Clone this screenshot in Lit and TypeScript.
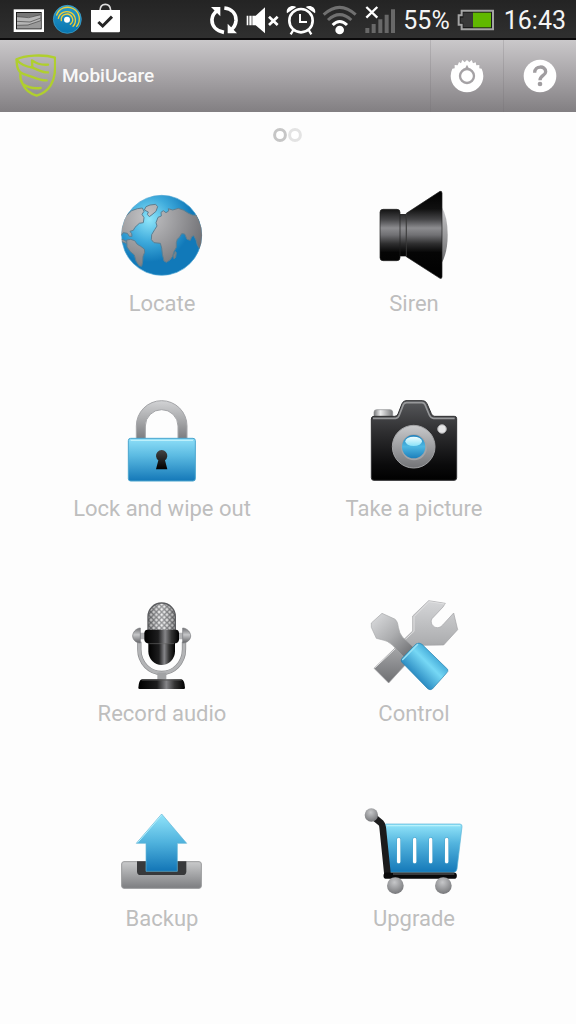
import { LitElement, html, css, svg, TemplateResult } from "lit";
import { customElement, property } from "lit/decorators.js";

const locate = html`<svg class="art" viewBox="6 0 360 330" aria-hidden="true">
  <defs>
    <radialGradient id="sea" cx="148" cy="118" r="150" gradientUnits="userSpaceOnUse">
      <stop offset="0" stop-color="#8fe6fa" /><stop offset=".45" stop-color="#3fabdc" /><stop offset=".85" stop-color="#1179b9" /><stop offset="1" stop-color="#1179b9" />
    </radialGradient>
    <radialGradient id="land" cx="140" cy="110" r="190" gradientUnits="userSpaceOnUse">
      <stop offset="0" stop-color="#c4c4c6" /><stop offset=".5" stop-color="#99999c" /><stop offset="1" stop-color="#6c6c70" />
    </radialGradient>
    <clipPath id="ball"><circle cx="185" cy="166" r="121" /></clipPath>
  </defs>
  <circle cx="185" cy="166" r="120" fill="url(#sea)" stroke="#4aa3d2" stroke-width="2" />
  <g clip-path="url(#ball)" fill="url(#land)" stroke="#5c7f92" stroke-width="3" stroke-linejoin="round">
    <path d="M55 150L74 112L95 92L112 86L127 84L132 94L126 103L132 113L130 128L118 130L105 142L100 151L90 154L95 161L96 169L88 169L82 160L70 158L64 166Z" />
    <path d="M138 80L150 75L167 73L173 80L168 94L156 104L148 110L142 103L145 96L133 90Z" />
    <path d="M60 176L72 180L84 188L78 190L62 184Z" />
    <path d="M80 180L92 178L104 182L112 193L122 199L133 207L134 217L129 229L128 246L125 259L117 257L108 243L103 225L91 215L81 201Z" />
    <path d="M190 92L198 98L206 93L205 86L218 90L235 85L250 90L264 99L277 105L290 106L310 150L306 204L298 205L292 195L288 180L281 167L275 170L271 181L261 178L254 162L245 161L239 171L232 178L229 188L229 202L222 215L218 229L210 240L199 247L192 243L187 222L185 204L181 190L162 188L154 179L155 164L164 149L171 138L168 128L174 112L184 108L183 97Z" />
    <path d="M226 214L229 218L227 232L222 237L220 226Z" />
  </g>
</svg>`;

const siren = html`<svg class="art" viewBox="3 0 360 330" aria-hidden="true">
  <defs>
    <linearGradient id="horn" x2="0" y1="34" y2="296" gradientUnits="userSpaceOnUse"><stop offset="0" stop-color="#000" /><stop offset=".2" stop-color="#101010" /><stop offset=".32" stop-color="#444446" /><stop offset=".42" stop-color="#8d8d90" /><stop offset=".5" stop-color="#707073" /><stop offset=".6" stop-color="#2e2e2f" /><stop offset=".7" stop-color="#050505" /><stop offset="1" stop-color="#000" /></linearGradient>
    <linearGradient id="dome" x2="0" y2="1"><stop offset="0" stop-color="#c8c8ca" /><stop offset=".5" stop-color="#9b9b9d" /><stop offset="1" stop-color="#6c6c6e" /></linearGradient>
  </defs>
  <path d="M266 80Q284 110 284 164Q284 218 266 249Z" fill="url(#dome)" />
  <rect x="136" y="102" width="26" height="127" fill="url(#horn)" />
  <rect x="81" y="88" width="60" height="154" rx="9" fill="url(#horn)" stroke="#202020" stroke-width="2" />
  <path d="M160 100L261 34Q267 32 267 40V290Q267 297 261 295L160 230Z" fill="url(#horn)" stroke="#202020" stroke-width="2" />
  <path d="M160 102V228" stroke="#444" stroke-width="2" />
</svg>`;

const lock = html`<svg class="art" viewBox="126 -15 360 330" aria-hidden="true">
  <defs>
    <linearGradient id="bow" x2="0" y2="1"><stop offset="0" stop-color="#d2d3d5" /><stop offset=".5" stop-color="#a9aaac" /><stop offset="1" stop-color="#7b7c7f" /></linearGradient>
    <linearGradient id="body" x2="0" y2="1"><stop offset="0" stop-color="#8edff8" /><stop offset=".4" stop-color="#5cbbe2" /><stop offset="1" stop-color="#1478b8" /></linearGradient>
    <linearGradient id="hole" x2="0" y2="1"><stop offset="0" stop-color="#444" /><stop offset="1" stop-color="#000" /></linearGradient>
  </defs>
  <path d="M229 146V108A76 76 0 0 1 381 108V146H354V108A49 49 0 0 0 256 108V146Z" fill="url(#bow)" stroke="#a4a5a8" stroke-width="3" />
  <rect x="205" y="145" width="201" height="128" rx="7" fill="url(#body)" stroke="#4aa5ce" stroke-width="3" />
  <path d="M212 151H399" stroke="#bdf0fb" stroke-width="4" />
  <path d="M295 211A17 17 0 1 1 315 211L322 238H288Z" fill="url(#hole)" />
</svg>`;

const camera = html`<svg class="art" viewBox="42 -15 360 330" aria-hidden="true">
  <defs>
    <linearGradient id="shell" x2="0" y2="1"><stop offset="0" stop-color="#57585b" /><stop offset=".4" stop-color="#2e2e30" /><stop offset=".8" stop-color="#0b0b0c" /><stop offset="1" stop-color="#000" /></linearGradient>
    <linearGradient id="ring" x2="0" y2="1"><stop offset="0" stop-color="#c9cacc" /><stop offset="1" stop-color="#737477" /></linearGradient>
    <linearGradient id="knob"><stop offset="0" stop-color="#77787a" /><stop offset=".35" stop-color="#ededee" /><stop offset="1" stop-color="#77787a" /></linearGradient>
    <linearGradient id="lens" x2="0" y2="1"><stop offset="0" stop-color="#2182bd" /><stop offset=".5" stop-color="#4db7e2" /><stop offset="1" stop-color="#1d7fbb" /></linearGradient>
    <linearGradient id="shine" x2="0" y2="1"><stop offset="0" stop-color="#eefdff" /><stop offset="1" stop-color="#8be2f8" /></linearGradient>
  </defs>
  <rect x="102" y="59" width="56" height="28" rx="8" fill="url(#knob)" stroke="#8b8c8e" stroke-width="2" />
  <path d="M102 79H164Q171 79 174 72L186 41Q190 32 198 32H248Q257 32 261 41L274 71Q277 79 284 79H343Q350 79 350 86V263Q350 271 342 271H102Q94 271 94 263V87Q94 79 102 79Z" fill="url(#shell)" stroke="#303032" stroke-width="3" />
  <path d="M99 85H167Q175 84 178 75L190 44Q193 38 200 38H246Q252 38 255 44L268 75Q272 84 281 85H344" fill="none" stroke="#97989a" stroke-width="5" />
  <circle cx="221" cy="170" r="64" fill="url(#ring)" stroke="#a2a3a5" stroke-width="3" />
  <circle cx="222" cy="172" r="39" fill="#a3a4a7" />
  <circle cx="221" cy="170" r="35" fill="url(#lens)" />
  <ellipse cx="221" cy="154" rx="25" ry="14" fill="url(#shine)" />
  <circle cx="306" cy="117" r="13" fill="#e6e6e7" stroke="#a5a5a7" stroke-width="3" />
</svg>`;

const mic = html`<svg class="art" viewBox="36 0 360 330" aria-hidden="true">
  <defs>
    <pattern id="mesh" width="16" height="16" patternUnits="userSpaceOnUse" patternTransform="translate(7 2)">
      <rect width="16" height="16" fill="#ececed" /><path d="M0 0L16 16M16 0L0 16" stroke="#77787b" stroke-width="4" />
    </pattern>
    <linearGradient id="black"><stop offset="0" stop-color="#000" /><stop offset=".4" stop-color="#1d1d1e" /><stop offset=".6" stop-color="#858588" /><stop offset=".78" stop-color="#333" /><stop offset="1" stop-color="#000" /></linearGradient>
    <linearGradient id="shade"><stop offset="0" stop-color="#000" stop-opacity=".3" /><stop offset=".5" stop-color="#fff" stop-opacity=".2" /><stop offset="1" stop-color="#000" stop-opacity=".3" /></linearGradient>
    <linearGradient id="ear" x2="0" y2="1"><stop offset="0" stop-color="#707174" /><stop offset=".45" stop-color="#c6c7c9" /><stop offset="1" stop-color="#626366" /></linearGradient>
  </defs>
  <path d="M148 155V178C148 220 180 249 215 249S282 220 282 178V155" fill="none" stroke="#8b8c8e" stroke-width="13" />
  <path d="M148 155V178C148 220 180 249 215 249S282 220 282 178V155" fill="none" stroke="#b3b4b6" stroke-width="9" />
  <path d="M202 248H229V270H202Z" fill="#a2a3a5" />
  <path d="M156 268H274Q284 270 285 294Q285 297 281 297H149Q145 297 145 294Q146 270 156 268Z" fill="url(#black)" />
  <path d="M155 270H275" stroke="#555" stroke-width="3" />
  <path d="M148 128H168V148H148ZM262 128H282V148H262Z" fill="#b4b5b7" />
  <path d="M151 114V159C137 159 128 148 128 138S137 115 151 114ZM278 114V159C293 159 302 148 302 138S293 115 278 114Z" fill="url(#ear)" stroke="#77787b" stroke-width="2" />
  <path d="M174 126V80A41 41 0 0 1 256 80V126Z" fill="url(#mesh)" />
  <path d="M174 126V80A41 41 0 0 1 256 80V126Z" fill="url(#shade)" stroke="#5b5c5f" stroke-width="4" />
  <path d="M175 150V184A40 41 0 0 0 255 184V150Z" fill="url(#black)" />
  <path d="M172 119H258Q267 120 267 130V149Q266 160 252 160H178Q164 160 163 149V130Q163 120 172 119Z" fill="url(#black)" />
  <path d="M178 161H252" stroke="#666" stroke-width="2" />
</svg>`;

const control = html`<svg class="art" viewBox="3 0 360 330" aria-hidden="true">
  <defs>
    <linearGradient id="steel" x2="0" y2="1"><stop offset="0" stop-color="#d5d6d8" /><stop offset=".5" stop-color="#aeafb1" /><stop offset="1" stop-color="#6e6f72" /></linearGradient>
    <linearGradient id="steel2" x1="60" y1="70" x2="180" y2="200" gradientUnits="userSpaceOnUse"><stop offset="0" stop-color="#dcdddf" /><stop offset=".5" stop-color="#acadaf" /><stop offset="1" stop-color="#67686b" /></linearGradient>
    <linearGradient id="grip" x1="176" y1="190" x2="258" y2="272" gradientTransform="rotate(-90 216 230)" gradientUnits="userSpaceOnUse"><stop offset="0" stop-color="#1676b4" /><stop offset=".6" stop-color="#76d8f5" /><stop offset="1" stop-color="#2e97cc" /></linearGradient>
  </defs>
  <path d="M227 32L277 40L270 51L237 86C230 98 240 113 253 113C260 113 264 110 269 105L302 69L314 119L272 165L211 166L107 279L63 235L179 123V78Z" fill="url(#steel)" stroke="#a1a2a4" stroke-width="2" />
  <path d="M65 234L183 124V80L228 35L275 42" fill="none" stroke="#e0e0e1" stroke-width="3" />
  <path d="M55 99L87 70L125 87Q134 93 136 112Q139 130 149 142L187 177L158 207L118 165Q103 151 86 149L70 145L55 112Z" fill="url(#steel2)" stroke="#a6a7a9" stroke-width="2" />
  <path d="M189 162Q198 156 207 163L284 238Q287 244 280 250L238 297Q231 302 224 296L146 216Q142 210 148 204Z" fill="url(#grip)" stroke="#267eac" stroke-width="2" />
  <path d="M148 210L195 162" stroke="#9be2f5" stroke-width="4" />
</svg>`;

const backup = html`<svg class="art" viewBox="6 -15 360 330" aria-hidden="true">
  <defs>
    <linearGradient id="tray" x2="0" y2="1"><stop offset="0" stop-color="#c9cacb" /><stop offset="1" stop-color="#7c7d80" /></linearGradient>
    <linearGradient id="arrow" x2="0" y2="1"><stop offset="0" stop-color="#91e4fa" /><stop offset=".5" stop-color="#4fb2dd" /><stop offset="1" stop-color="#1275b6" /></linearGradient>
  </defs>
  <rect x="65" y="185" width="239" height="80" rx="7" fill="url(#tray)" stroke="#98999b" stroke-width="3" />
  <path d="M111 184H259V215Q258 225 249 225H121Q112 225 111 215Z" fill="#38393b" />
  <path d="M185 42L260 130H232V214H138V130H109Z" fill="url(#arrow)" stroke="#63b7d8" stroke-width="2" />
  <path d="M113 128L185 45" stroke="#b1effc" stroke-width="3" />
</svg>`;

const upgrade = html`<svg class="art" viewBox="3 -15 360 330" aria-hidden="true">
  <defs>
    <linearGradient id="basket" x2="0" y2="1"><stop offset="0" stop-color="#93e5fa" /><stop offset=".4" stop-color="#53b4de" /><stop offset="1" stop-color="#1478b8" /></linearGradient>
    <radialGradient id="wheel" cx=".45" cy=".3" r=".7"><stop offset="0" stop-color="#c6c7c9" /><stop offset="1" stop-color="#77787b" /></radialGradient>
  </defs>
  <path d="M97 72H321Q328 73 327 80L312 207Q310 217 302 217H108Z" fill="url(#basket)" stroke="#5ab4d6" stroke-width="2" />
  <path d="M101 77H322" stroke="#b8f1fb" stroke-width="4" />
  <path d="M60 49L84 69Q88 73 89 82L104 228" fill="none" stroke="#1b1b1c" stroke-width="20" stroke-linejoin="round" />
  <path d="M101 227H302" stroke="#0a0a0b" stroke-width="19" stroke-linecap="round" />
  <path d="M120 222H304" stroke="#4b4b4d" stroke-width="4" />
  <path d="M137 118V185M185 118V185M233 118V185M281 118V185" stroke="#4ba3cb" stroke-width="13" stroke-linecap="round" />
  <path d="M137 118V185M185 118V185M233 118V185M281 118V185" stroke="#fff" stroke-width="10" stroke-linecap="round" />
  <circle cx="55" cy="45" r="20" fill="url(#wheel)" />
  <circle cx="127" cy="257" r="25" fill="url(#wheel)" />
  <circle cx="271" cy="257" r="25" fill="url(#wheel)" />
</svg>`;

@customElement("phone-status")
export class PhoneStatus extends LitElement {
  static styles = css`
    :host {
      display: flex;
      justify-content: space-between;
      height: 40px;
      box-sizing: border-box;
      padding: 0 10px 0 12px;
      border-bottom: 2px solid #0b0a0b;
      background: linear-gradient(#242424, #2f2f2f);
      color: #f4f4f4;
      font: 25px/42px Roboto, sans-serif;
    }
    .group { display: flex; gap: 6px; }
    .ico { display: block; height: 40px; flex: none; }
    .w28 { width: 28px; }
    .w30 { width: 30px; }
    .w33 { width: 33px; }
    .w36 { width: 36px; }
    .w42 { width: 42px; }
  `;
  render() {
    return html`
      <div class="group">
        <svg class="ico w33" viewBox="36 0 99 120" aria-hidden="true">
          <rect x="41" y="28" width="91" height="68" fill="#fff" />
          <rect x="48" y="36" width="77" height="52" fill="#1c1c1c" />
          <path d="M51 39H122V85H51Z" fill="#b5b5b5" />
          <path d="M51 39H122V45L86 52L51 50Z" fill="#777" />
          <path d="M51 76L84 75L122 62V85H51Z" fill="#999" />
          <path d="M51 50L86 53L122 44M51 64L90 66L122 54M51 76L84 75L122 62" fill="none" stroke="#444" stroke-width="2" />
        </svg>
        <svg class="ico w33" viewBox="153 0 99 120" aria-hidden="true">
          <defs><linearGradient id="orb" x2="0" y2="1"><stop offset="0" stop-color="#2a9ac9" /><stop offset="1" stop-color="#0875b0" /></linearGradient></defs>
          <circle cx="202" cy="58" r="42" fill="url(#orb)" stroke="#47a9d3" stroke-width="2" />
          <g fill="none" stroke="#f0cf35" stroke-width="4" stroke-linecap="round">
            <path d="M184 62A17 17 0 1 1 211 73" />
            <path d="M175 55A26 26 0 1 1 219 79" />
            <path d="M170 45A35 35 0 1 1 230 79" />
          </g>
          <circle cx="201" cy="59" r="9" fill="#fff" />
        </svg>
        <svg class="ico w30" viewBox="270 0 90 120" aria-hidden="true">
          <path d="M300 31Q301 13 316 13T332 31" fill="none" stroke="#ddd" stroke-width="5" />
          <path d="M273 30H360V93Q360 97 356 97H277Q273 97 273 93Z" fill="#fff" />
          <path d="M295 66L308 78L336 50" fill="none" stroke="#252525" stroke-width="9" />
        </svg>
      </div>
      <div class="group">
        <svg class="ico w28" viewBox="33 0 84 120" aria-hidden="true">
          <g fill="none" stroke="#fff" stroke-width="11">
            <path d="M75 97C52 93 38 78 39 58C40 46 46 38 55 31" />
            <path d="M76 24C99 27 112 42 111 62C110 75 104 84 95 90" />
          </g>
          <path d="M36 21H64V49ZM86 71V100H114Z" fill="#fff" />
        </svg>
        <svg class="ico w36" viewBox="135 0 108 120" aria-hidden="true">
          <path d="M143 47H148V76H143ZM151 47H158V76H151ZM160 47H170L198 22V100L170 76H160Z" fill="#fff" />
          <path d="M210 50L236 75M236 50L210 75" stroke="#fff" stroke-width="8" />
        </svg>
        <svg class="ico w30" viewBox="261 0 90 120" aria-hidden="true">
          <circle cx="306" cy="62" r="35" fill="none" stroke="#fff" stroke-width="8" />
          <path d="M303 42V66H324" fill="none" stroke="#fff" stroke-width="6" />
          <path d="M283 90L275 103M329 90L337 103" stroke="#fff" stroke-width="7" />
          <path d="M264 40C259 24 277 12 292 21ZM348 40C353 24 335 12 320 21Z" fill="#fff" />
        </svg>
        <svg class="ico w36" viewBox="369 0 108 120" aria-hidden="true">
          <g fill="none" stroke-width="9">
            <path d="M374 44Q422 0 470 44" stroke="#707070" />
            <path d="M387 60Q422 28 457 60" stroke="#707070" />
            <path d="M401 75Q422 54 444 75" stroke="#fff" />
          </g>
          <circle cx="422" cy="90" r="13" fill="#fff" />
        </svg>
        <svg class="ico w33" viewBox="495 0 99 120" aria-hidden="true">
          <path d="M499 84H511V99H499ZM518 72H530V99H518ZM538 58H550V99H538ZM557 44H569V99H557ZM576 28H588V99H576Z" fill="#686868" />
          <path d="M502 21L535 53M535 21L502 53" stroke="#fff" stroke-width="7" />
        </svg>
        <span>55%</span>
        <svg class="ico w42" viewBox="240 0 126 120" aria-hidden="true">
          <path d="M257 32H351V88H257V74H248V46H257Z" fill="#1b1b1b" stroke="#a4a4a4" stroke-width="6" />
          <path d="M262 38H291V81H262V68H254V53H262Z" fill="#383838" />
          <rect x="291" y="38" width="54" height="44" fill="#60b800" />
        </svg>
        <time>16:43</time>
      </div>
    `;
  }
}

@customElement("app-header")
export class AppHeader extends LitElement {
  static styles = css`
    :host {
      display: flex;
      align-items: stretch;
      height: 72px;
      background: linear-gradient(#cac8ca, #a7a4a7 50%, #827f82);
      color: #fff;
    }
    .brand { display: flex; align-items: center; gap: 6px; flex: 1; padding-left: 14px; }
    .logo { width: 42px; height: 72px; display: block; }
    .name { margin: 0; font: 500 19px/72px Roboto, sans-serif; color: #f8f8f8; }
    .action {
      width: 73px;
      padding: 0;
      border: 0;
      border-left: 1px solid rgba(110, 107, 110, 0.22);
      background: none;
      display: grid;
      place-items: center;
      cursor: pointer;
    }
    .glyph { width: 36px; height: 36px; display: block; }
  `;
  render() {
    return html`
      <div class="brand">
        <svg class="logo" viewBox="42 120 126 216" aria-hidden="true">
          <g fill="none" stroke="#b0cf2e" stroke-width="7" stroke-linecap="round" stroke-linejoin="round">
            <path d="M50 178C72 166 130 162 165 173C166 210 166 234 152 256C141 273 126 282 110 287C91 281 76 270 70 256" />
            <path d="M50 178C50 204 54 218 76 224C96 229 122 243 140 241" />
            <path d="M51 181Q66 198 97 203C114 209 130 219 144 217" />
            <path d="M97 200L96 181Q116 196 144 194" />
            <path d="M61 222Q60 240 68 252C84 263 104 266 122 264" />
          </g>
        </svg>
        <h1 class="name">MobiUcare</h1>
      </div>
      <button class="action" aria-label="Settings">
        <svg class="glyph" viewBox="0 0 108 108" aria-hidden="true">
          <path d="M30 12L36 16L40 6L47 13L54 6L61 13L68 6L72 16L80 13L82 22L91 21L91 31L98 32Q103 43 103 54A49 49 0 0 1 5 54Q5 43 10 32L17 31L17 21L26 22Z" fill="#fff" />
          <circle cx="54" cy="54" r="21" fill="none" stroke="#a5a2a5" stroke-width="7" />
          <path d="M54 20L61 34H47Z" fill="#a5a2a5" />
        </svg>
      </button>
      <button class="action" aria-label="Help">
        <svg class="glyph" viewBox="0 0 108 108" aria-hidden="true">
          <circle cx="54" cy="54" r="49" fill="#fff" />
          <path d="M38 44C38 22 71 22 71 41C71 53 54 52 54 67" fill="none" stroke="#a09da0" stroke-width="10" />
          <circle cx="54" cy="78" r="7" fill="#a09da0" />
        </svg>
      </button>
    `;
  }
}

@customElement("feature-tile")
export class FeatureTile extends LitElement {
  @property() label = "";
  @property({ attribute: false }) art?: TemplateResult;
  static styles = css`
    :host { display: grid; justify-items: center; }
    .tile {
      display: grid;
      justify-items: center;
      padding: 0;
      border: 0;
      background: none;
      color: #bebebe;
      font: 22px/28px Roboto, sans-serif;
      cursor: pointer;
    }
    .art { display: block; width: 120px; height: 110px; }
  `;
  render() {
    return html`<button class="tile">${this.art}<span>${this.label}</span></button>`;
  }
}

@customElement("app-root")
export class AppRoot extends LitElement {
  static styles = css`
    :host {
      display: flex;
      flex-direction: column;
      min-height: 100vh;
      background: #fdfdfd;
    }
    .pager { display: flex; justify-content: center; padding: 16px 0 38px; }
    .dots { display: block; width: 30px; height: 14px; }
    .features {
      display: grid;
      grid-template-columns: 1fr 1fr;
      row-gap: 67px;
      padding: 0 36px 40px;
    }
  `;
  private features = [
    { label: "Locate", art: locate },
    { label: "Siren", art: siren },
    { label: "Lock and wipe out", art: lock },
    { label: "Take a picture", art: camera },
    { label: "Record audio", art: mic },
    { label: "Control", art: control },
    { label: "Backup", art: backup },
    { label: "Upgrade", art: upgrade },
  ];
  private dot(x: number, color: string) {
    return svg`<circle cx=${x} cy="7" r="5.4" fill="#fff" stroke=${color} stroke-width="3" />`;
  }
  render() {
    return html`
      <phone-status></phone-status>
      <app-header></app-header>
      <main>
        <div class="pager">
          <svg class="dots" viewBox="0 0 30 14" role="img" aria-label="Page 1 of 2">
            ${this.dot(7, "#c6c6c6")}${this.dot(22, "#e3e3e3")}
          </svg>
        </div>
        <div class="features">
          ${this.features.map((f) => html`<feature-tile .label=${f.label} .art=${f.art}></feature-tile>`)}
        </div>
      </main>
    `;
  }
}
